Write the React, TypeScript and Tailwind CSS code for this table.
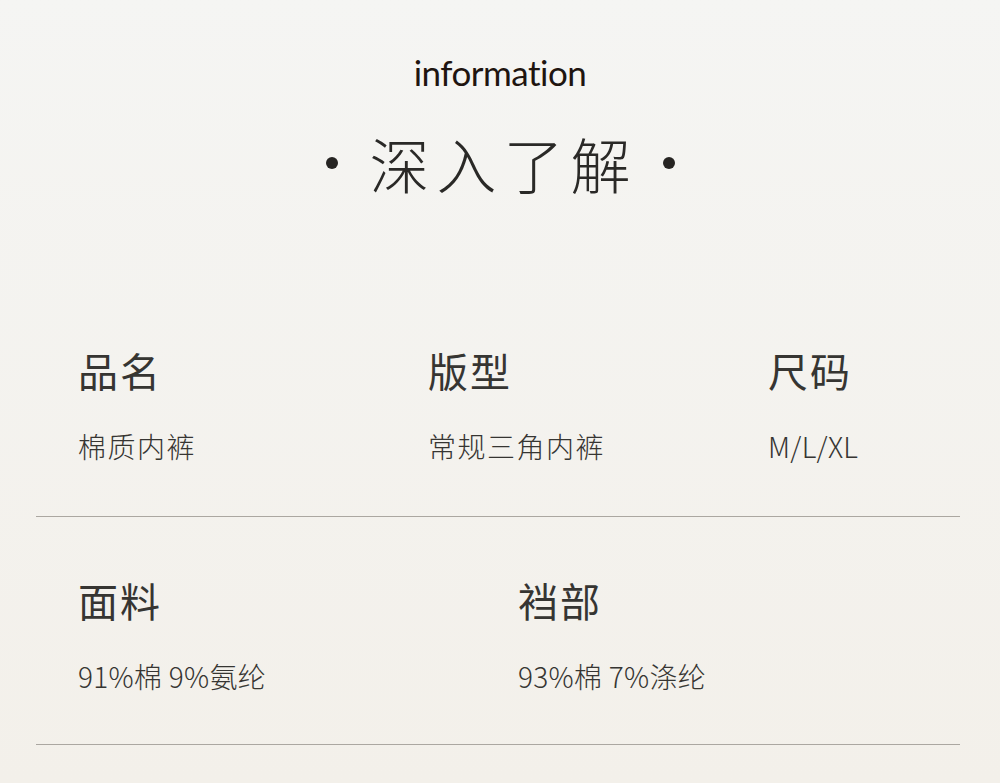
import React from "react";

const cjk = { fontFamily: '"Noto Sans CJK SC", "Noto Sans", sans-serif' };

function Label({ children }: { children: React.ReactNode }) {
  return (
    <div className="text-[40px] leading-[48px] tracking-[2px] text-[#363532]" style={cjk}>
      {children}
    </div>
  );
}

function Value({ children, tight }: { children: React.ReactNode; tight?: boolean }) {
  return (
    <div
      className={
        tight
          ? "mt-[34px] text-[28px] leading-[36px] tracking-[0.3px] text-[#363532] font-light"
          : "mt-[34px] text-[28px] leading-[36px] tracking-[1.5px] text-[#363532] font-light"
      }
      style={cjk}
    >
      {children}
    </div>
  );
}

export default function App() {
  return (
    <div className="w-[1000px] h-[783px] overflow-hidden bg-gradient-to-b from-[#f5f5f3] to-[#f3f0ea]">
      <div className="pt-[52px] flex flex-col items-center">
        <div
          className="text-[35px] leading-[40px] tracking-[-0.5px] text-[#1f1510] font-normal"
          style={{ fontFamily: '"Lato", "Open Sans", sans-serif' }}
        >
          information
        </div>
        <div className="mt-[31px] flex items-center h-[80px]">
          <span className="w-[12px] h-[12px] rounded-full bg-[#262422]" />
          <span
            className="ml-[32px] mr-[25px] text-[60px] leading-[80px] tracking-[7px] text-[#2a2927] font-light"
            style={cjk}
          >
            深入了解
          </span>
          <span className="w-[12px] h-[12px] rounded-full bg-[#262422]" />
        </div>
      </div>

      <div className="mt-[143px] mx-[36px] w-[924px]">
        <div className="grid grid-cols-[350px_340px_1fr] pl-[42px] pb-[52px] border-b border-[#aba7a1]">
          <div>
            <Label>品名</Label>
            <Value>棉质内裤</Value>
          </div>
          <div>
            <Label>版型</Label>
            <Value>常规三角内裤</Value>
          </div>
          <div>
            <Label>尺码</Label>
            <Value tight>M/L/XL</Value>
          </div>
        </div>
        <div className="grid grid-cols-[440px_1fr] pl-[42px] pt-[59px] pb-[50px] border-b border-[#aba7a1]">
          <div>
            <Label>面料</Label>
            <Value tight>91%棉 9%氨纶</Value>
          </div>
          <div>
            <Label>裆部</Label>
            <Value tight>93%棉 7%涤纶</Value>
          </div>
        </div>
      </div>
    </div>
  );
}
